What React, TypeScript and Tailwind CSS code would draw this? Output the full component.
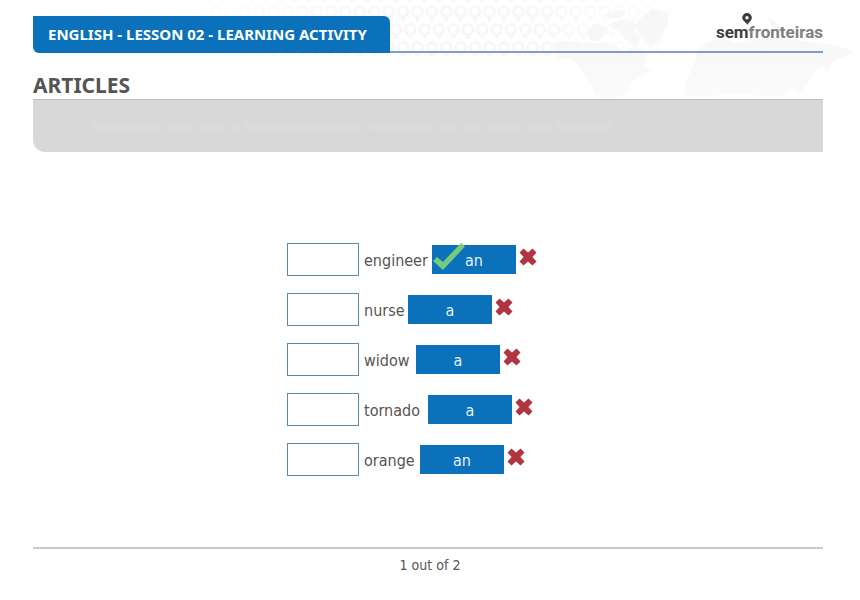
interface Answer {
  word: string;
  article: string;
  wordWidth: string;
  checked?: boolean;
}

const ANSWERS: Answer[] = [
  { word: "engineer", article: "an", wordWidth: "w-[68px]", checked: true },
  { word: "nurse", article: "a", wordWidth: "w-[44px]" },
  { word: "widow", article: "a", wordWidth: "w-[52px]" },
  { word: "tornado", article: "a", wordWidth: "w-[64px]" },
  { word: "orange", article: "an", wordWidth: "w-[56px]" },
];

// x position and width of each faded word in the instruction bar
const FADED_WORDS = [
  [59, 68], [135, 24], [167, 24], [199, 7], [211, 116], [337, 65],
  [407, 17], [431, 16], [455, 32], [495, 24], [523, 56],
];

function HeaderArt() {
  return (
    <svg
      className="absolute right-0 top-0 h-[99px] w-[860px]"
      viewBox="0 0 860 99"
      fill="none"
      aria-hidden="true"
    >
      <defs>
        <pattern id="pins" width="14.400" height="36" patternUnits="userSpaceOnUse" x="7" y="3">
          <g stroke="#f7f7f7" strokeWidth="3">
            <circle cx="7.200" cy="8.500" r="5" />
            <path d="M6 14l1.200 3 1.200-3" />
            <circle cx="0" cy="26.500" r="5" />
            <circle cx="14.400" cy="26.500" r="5" />
            <path d="M-1.200 32l1.200 3 1.200-3M13.200 32l1.200 3 1.200-3" />
          </g>
        </pattern>
        <linearGradient id="fade">
          <stop offset="0.1" stopColor="#fff" stopOpacity="0" />
          <stop offset="0.5" stopColor="#fff" />
          <stop offset="0.7" stopColor="#fff" />
          <stop offset="1" stopColor="#fff" stopOpacity="0" />
        </linearGradient>
        <mask id="pin-mask">
          <rect x="100" width="600" height="56" fill="url(#fade)" />
        </mask>
        <linearGradient id="land" x1="0" y1="0" x2="0" y2="99" gradientUnits="userSpaceOnUse">
          <stop offset="0.3" stopColor="#f7f7f7" />
          <stop offset="1" stopColor="#fbfbfb" />
        </linearGradient>
      </defs>
      <rect x="100" width="600" height="56" fill="url(#pins)" mask="url(#pin-mask)" />
      <g fill="url(#land)">
        <path d="M550 46l10-5 16 1 14 2 12-2 14 3 6 7 12-6 9 5 4 11-3 3 7 6-8 4-6 3-7 6-2 8-8 6h-22l-5-10-8-12-8-12-8-6-14 3 4-7z" />
        <path d="M586 32l8-8 9 2 6 5-6 4-4 7-9-2zM606 14l12-4 8 2-6 6-12 1zM612 22l14-3 12 6-4 7 7 8-6 6-9-6-6-9-9-3z" />
        <path d="M638 20l14-11 17 4-2 13-7 14-10 8-8-10-6-10z" />
        <path d="M692 68l6-18 10-8 16-3 12 4 20-4 24-1 24 3 22 3 18 4 10 5-12 5-9 3-6 10-5-6-8 6-4 10-10 14-10-6-8 7h-24l-18-3-18 2-18 2-20-2 2-14z" />
        <path d="M768 18l8 4 9 9-6 1-8-7z" />
      </g>
    </svg>
  );
}

function Logo() {
  return (
    <div className="relative font-[Roboto,'Liberation_Sans',sans-serif] text-[17px] leading-[20px] font-bold text-[#3f3f3f]">
      sem<span className="text-[#808080]">fronteiras</span>
      <svg className="absolute -top-[9px] left-[26px] h-3 w-[10px]" viewBox="0 0 10 12" aria-hidden="true">
        <path
          fill="#3a3a3a"
          fillRule="evenodd"
          d="M5 0a4.800 4.800 0 0 1 4.800 4.800C9.800 7.600 7 8.700 5.300 12 3.800 8.700 0.200 7.600 0.200 4.800A4.800 4.800 0 0 1 5 0zm0 3.100a1.700 1.700 0 1 0 0 3.400 1.700 1.700 0 0 0 0-3.400z"
        />
      </svg>
    </div>
  );
}

function Tick() {
  return (
    <svg className="absolute -top-0.5 left-px h-[28px] w-8" viewBox="0 0 32 28" aria-hidden="true">
      <path d="M0 18l4-4 6 5L28 0l4 3.500L10 27z" fill="#77ca7c" />
    </svg>
  );
}

function Cross() {
  return (
    <svg className="mt-[5px] ml-[3px] h-[18px] w-[18px] self-start" viewBox="0 0 18 18" aria-label="Incorrect" role="img">
      <path
        d="M4.500 0.500L9 4.400 13.500 0.500 17.500 4.500 13.400 9 17.500 13.500 13.500 17.500 9 13.600 4.500 17.500 0.500 13.500 4.600 9 0.500 4.500z"
        fill="#b03540"
      />
    </svg>
  );
}

function AnswerRow({ word, article, wordWidth, checked }: Answer) {
  return (
    <li className="flex h-[33px] items-center">
      <input
        id={word}
        type="text"
        className="h-full w-[72px] border border-[#5a8aa8] bg-white px-2 text-center outline-none"
      />
      <label htmlFor={word} className={`ml-[5px] shrink-0 pt-0.5 whitespace-nowrap ${wordWidth}`}>
        {word}
      </label>
      <button className="relative h-[29px] w-[84px] shrink-0 bg-[#0b71ba] pt-0.5 text-[#e3f0fa]">
        {checked && <Tick />}
        {article}
      </button>
      <Cross />
    </li>
  );
}

export default function App() {
  return (
    <div className="relative bg-white font-['DejaVu_Sans_Condensed','DejaVu_Sans',sans-serif] text-[16px] text-[#555]">
      <HeaderArt />

      <div className="relative pt-4 pr-[37px] pl-[33px]">
        <header className="flex h-[37px]">
          <h1 className="flex items-center rounded-tr-md rounded-bl-md bg-[#0b71ba] pr-[23px] pl-[15px] font-['Noto_Sans',sans-serif] text-[15px] font-bold whitespace-nowrap text-white">
            ENGLISH - LESSON 02 - LEARNING ACTIVITY
          </h1>
          <div className="flex flex-1 justify-end border-b-2 border-[#7ea0c4] pt-[6px]">
            <Logo />
          </div>
        </header>

        <h2 className="mt-[18px] font-['Noto_Sans',sans-serif] text-[21px] leading-[28px] font-bold">
          ARTICLES
        </h2>

        {/* Instruction bar */}
        <div className="h-[53px] rounded-bl-xl border-t border-[#bdbdbd] bg-[#d8d8d8] pt-[21px]">
          <svg className="h-3 w-[600px]" viewBox="0 0 600 12" aria-hidden="true">
            {FADED_WORDS.map(([x, width]) => (
              <rect key={x} x={x} y="2" width={width} height="8" fill="#dadada" />
            ))}
          </svg>
        </div>

        <ul className="mx-auto mt-[91px] flex w-[282px] flex-col gap-[17px]">
          {ANSWERS.map((answer) => (
            <AnswerRow key={answer.word} {...answer} />
          ))}
        </ul>

        <footer className="mt-[71px] border-t-2 border-[#c8c8c8] pt-[6px] pl-1 text-center text-[14px] leading-5">
          1 out of 2
        </footer>
      </div>
    </div>
  );
}
